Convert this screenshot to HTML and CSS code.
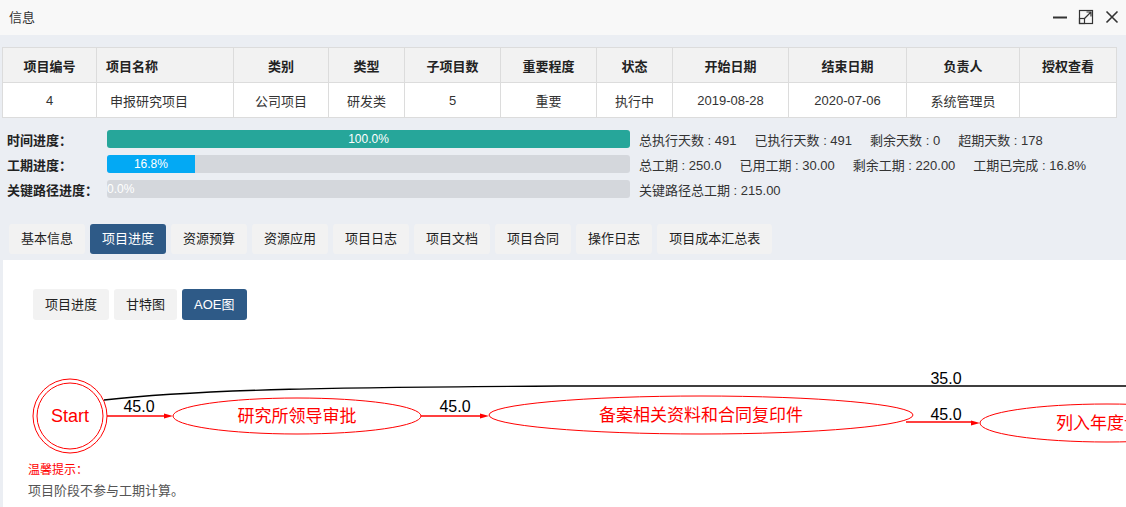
FILE: index.html
```html
<!DOCTYPE html>
<html lang="zh-CN">
<head>
  <meta charset="UTF-8">
  <title>信息</title>
  <link rel="stylesheet" href="styles.css">
</head>
<body>
  <div class="titlebar">
    <span class="title">信息</span>
    <div class="win-btns">
      <svg width="16" height="16" viewBox="0 0 16 16"><path d="M1 8.5h14" stroke="#333" stroke-width="2"/></svg>
      <svg width="16" height="16" viewBox="0 0 16 16" fill="none" stroke="#333" stroke-width="1.2">
        <rect x="1.5" y="1.5" width="13" height="13"/>
        <rect x="1.5" y="9.5" width="5" height="5"/>
        <path d="M6.5 9.5L13 3M8.5 3H13V7.5"/>
      </svg>
      <svg width="16" height="16" viewBox="0 0 16 16"><path d="M2.5 2.5l11 11M13.5 2.5l-11 11" stroke="#333" stroke-width="1.6"/></svg>
    </div>
  </div>

  <div class="info">
    <table class="proj-table">
      <colgroup>
        <col style="width:94px"><col style="width:137px"><col style="width:95px"><col style="width:76px">
        <col style="width:96px"><col style="width:96px"><col style="width:76px"><col style="width:116px">
        <col style="width:118px"><col style="width:113px"><col style="width:97px">
      </colgroup>
      <tr>
        <th>项目编号</th><th class="left">项目名称</th><th>类别</th><th>类型</th><th>子项目数</th><th>重要程度</th>
        <th>状态</th><th>开始日期</th><th>结束日期</th><th>负责人</th><th>授权查看</th>
      </tr>
      <tr>
        <td>4</td><td class="left name">申报研究项目</td><td>公司项目</td><td>研发类</td><td>5</td><td>重要</td>
        <td>执行中</td><td>2019-08-28</td><td>2020-07-06</td><td>系统管理员</td><td></td>
      </tr>
    </table>
  </div>

  <div class="progress">
    <div class="prow">
      <span class="plabel">时间进度：</span>
      <div class="track"><div class="fill teal" style="width:100%">100.0%</div></div>
      <div class="stats"><span>总执行天数 : 491</span><span>已执行天数 : 491</span><span>剩余天数 : 0</span><span>超期天数 : 178</span></div>
    </div>
    <div class="prow">
      <span class="plabel">工期进度：</span>
      <div class="track"><div class="fill blue" style="width:16.8%">16.8%</div></div>
      <div class="stats"><span>总工期 : 250.0</span><span>已用工期 : 30.00</span><span>剩余工期 : 220.00</span><span>工期已完成 : 16.8%</span></div>
    </div>
    <div class="prow">
      <span class="plabel">关键路径进度：</span>
      <div class="track"><div class="fill" style="width:0%">0.0%</div></div>
      <div class="stats"><span>关键路径总工期 : 215.00</span></div>
    </div>
  </div>

  <div class="tabs">
    <span class="tab">基本信息</span>
    <span class="tab active">项目进度</span>
    <span class="tab">资源预算</span>
    <span class="tab">资源应用</span>
    <span class="tab">项目日志</span>
    <span class="tab">项目文档</span>
    <span class="tab">项目合同</span>
    <span class="tab">操作日志</span>
    <span class="tab">项目成本汇总表</span>
  </div>

  <div class="panel">
    <div class="subtabs">
      <span class="subtab">项目进度</span>
      <span class="subtab">甘特图</span>
      <span class="subtab active">AOE图</span>
    </div>

    <svg class="aoe" width="1123" height="140" viewBox="3 319 1123 140">
      <path d="M104 399 C 200 388 350 386 560 385 L 1126 385" fill="none" stroke="#000" stroke-width="1.3"/>
      <text x="946" y="383" class="elabel">35.0</text>

      <circle cx="70" cy="415" r="37" fill="none" stroke="#f00"/>
      <circle cx="70" cy="415" r="33" fill="none" stroke="#f00"/>
      <text x="70" y="421" class="start">Start</text>

      <path d="M107 415H166" stroke="#f00" stroke-width="1.3"/>
      <polygon points="164,412.5 173,415 164,417.5" fill="#f00"/>
      <text x="139" y="411" class="elabel">45.0</text>

      <ellipse cx="297" cy="415" rx="124" ry="18" fill="none" stroke="#f00"/>
      <text x="297" y="421" class="node">研究所领导审批</text>

      <path d="M421 415H482" stroke="#f00" stroke-width="1.3"/>
      <polygon points="480,412.5 489,415 480,417.5" fill="#f00"/>
      <text x="455" y="411" class="elabel">45.0</text>

      <ellipse cx="701" cy="414" rx="212" ry="19" fill="none" stroke="#f00"/>
      <text x="701" y="420" class="node">备案相关资料和合同复印件</text>

      <path d="M906 421H973" stroke="#f00" stroke-width="1.3"/>
      <polygon points="971,419.5 980,422 971,424.5" fill="#f00"/>
      <text x="946" y="419" class="elabel">45.0</text>

      <ellipse cx="1107" cy="422" rx="127" ry="19" fill="none" stroke="#f00"/>
      <text x="1107" y="428" class="node">列入年度计划</text>
    </svg>

    <div class="notes">
      <div class="tip">温馨提示：</div>
      <div class="tip-text">项目阶段不参与工期计算。</div>
    </div>
  </div>
</body>
</html>
```

FILE: styles.css
```css
html, body {
  margin: 0;
  padding: 0;
  background: #ebeef3;
  color: #333;
  font-family: "Liberation Sans", "Noto Sans CJK SC", sans-serif;
  font-size: 13px;
  height: 507px;
  overflow: hidden;
}
.titlebar {
  height: 35px;
  background: #f8f8f8;
  display: flex;
  align-items: center;
  justify-content: space-between;
  padding: 0 6px 0 9px;
}
.title {
  color: #333;
  margin-top: -3px;
}
.win-btns {
  display: flex;
  gap: 10px;
  margin-top: -1px;
}
.info {
  padding: 12px 10px 0 2px;
}
.proj-table {
  border-collapse: collapse;
  table-layout: fixed;
  width: 1114px;
  background: #fff;
}
.proj-table th,
.proj-table td {
  border: 1px solid #dcdcdc;
  height: 34px;
  padding: 0;
  text-align: center;
  white-space: nowrap;
  overflow: hidden;
}
.proj-table th {
  background: #f2f2f2;
  font-weight: bold;
  color: #222;
}
.proj-table .left {
  text-align: left;
  padding-left: 9px;
}
.proj-table td.name {
  padding-left: 13px;
}
.progress {
  margin-top: 12px;
  display: flex;
  flex-direction: column;
  gap: 7px;
}
.prow {
  display: flex;
  align-items: center;
  height: 18px;
}
.plabel {
  width: 100px;
  padding-left: 7px;
  font-weight: bold;
  color: #222;
  white-space: nowrap;
}
.track {
  width: 523px;
  height: 18px;
  background: #d4d7dc;
  border-radius: 3px;
  overflow: hidden;
}
.fill {
  height: 18px;
  line-height: 18px;
  color: #fff;
  text-align: center;
  white-space: nowrap;
  font-size: 12px;
}
.fill.teal {
  background: #26a69a;
}
.fill.blue {
  background: #03a9f4;
}
.stats {
  margin-left: 9px;
  display: flex;
  gap: 18px;
  white-space: nowrap;
}
.tabs {
  margin-top: 26px;
  padding-left: 9px;
  display: flex;
  gap: 5px;
}
.tab {
  height: 30px;
  line-height: 30px;
  padding: 0 12px;
  background: #f2f2f2;
  border-radius: 3px;
  color: #222;
}
.tab.active,
.subtab.active {
  background: #2e5a87;
  color: #fff;
}
.panel {
  margin: 6px 0 0 3px;
  background: #fff;
  height: 248px;
  overflow: hidden;
}
.subtabs {
  padding: 29px 0 0 30px;
  display: flex;
  gap: 5px;
}
.subtab {
  height: 31px;
  line-height: 31px;
  padding: 0 12px;
  background: #f2f2f2;
  border-radius: 3px;
  color: #222;
}
.aoe {
  display: block;
}
.aoe text {
  text-anchor: middle;
}
.aoe .start {
  font-family: "Liberation Sans", sans-serif;
  font-size: 18px;
  fill: #f00;
}
.aoe .node {
  font-family: "Noto Sans CJK SC", sans-serif;
  font-size: 17px;
  fill: #f00;
}
.aoe .elabel {
  font-family: "Liberation Sans", sans-serif;
  font-size: 16px;
  fill: #000;
}
.notes {
  padding-left: 25px;
}
.tip {
  color: #f00;
  font-size: 12px;
  line-height: 20px;
}
.tip-text {
  color: #555;
  line-height: 22px;
}
```
